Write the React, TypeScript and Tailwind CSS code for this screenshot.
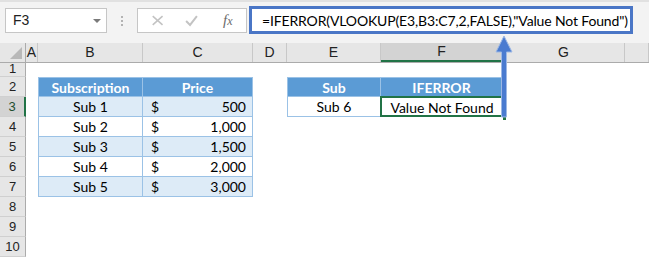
import React from "react";

const cellFont = { fontFamily: "Lato, 'Noto Sans', sans-serif" };
const uiFont = { fontFamily: "'Liberation Sans', Arial, sans-serif" };

const cols = ["A", "B", "C", "D", "E", "F", "G", ""];
const colW = ["w-[12px]", "w-[105px]", "w-[110px]", "w-[34px]", "w-[94px]", "w-[122px]", "w-[122px]", "w-[24px]"];

const data = [
  { sub: "Sub 1", price: "500" },
  { sub: "Sub 2", price: "1,000" },
  { sub: "Sub 3", price: "1,500" },
  { sub: "Sub 4", price: "2,000" },
  { sub: "Sub 5", price: "3,000" },
];

function FormulaBar() {
  return (
    <div className="h-[43px] bg-[#f3f3f3] border-t-2 border-[#e1e1e1] flex items-start pt-[6px] pl-[5px]">
      <div className="w-[102px] h-[25px] bg-white border border-[#c6c6c6] flex items-center justify-between pl-[7px] pr-[5px]" style={uiFont}>
        <span className="text-[14px] text-[#222]">F3</span>
        <span className="w-0 h-0 border-l-[4px] border-r-[4px] border-t-[4px] border-l-transparent border-r-transparent border-t-[#7a7a7a]" />
      </div>
      <div className="w-[30px] h-[25px] flex flex-col items-center justify-center gap-[2px]">
        <span className="w-[2px] h-[2px] bg-[#b3b3b3]" />
        <span className="w-[2px] h-[2px] bg-[#b3b3b3]" />
        <span className="w-[2px] h-[2px] bg-[#b3b3b3]" />
      </div>
      <div className="w-[110px] h-[25px] bg-white border border-[#c6c6c6] flex items-center">
        <svg width="110" height="23" viewBox="0 0 110 23">
          <path d="M15 7 L25 16 M25 7 L15 16" stroke="#c3c3c3" strokeWidth="1.6" />
          <path d="M49 12 L53 16 L60 7" stroke="#c3c3c3" strokeWidth="2" fill="none" />
        </svg>
        <span className="absolute ml-[85px] text-[15px] italic text-[#6b6b6b]" style={{ fontFamily: "'Liberation Serif', serif" }}>
          f<span className="text-[12px]">x</span>
        </span>
      </div>
      <div className="ml-[2px] -mt-[2px] w-[384px] h-[28px] bg-white border-[3px] border-[#4a76c6] flex items-center pl-[10px] text-[14px] tracking-[-0.15px] whitespace-nowrap overflow-hidden text-black" style={cellFont}>
        =IFERROR(VLOOKUP(E3,B3:C7,2,FALSE),"Value Not Found")
      </div>
    </div>
  );
}

function HeaderRow() {
  return (
    <div className="flex h-[20px] bg-[#e6e6e6] border-b border-[#ababab]" style={uiFont}>
      <div className="w-[26px] border-r border-[#ababab] flex items-end justify-end pr-[3px] pb-[3px]">
        <span className="w-0 h-0 border-r-[12px] border-r-[#b8b8b8] border-t-[12px] border-t-transparent" />
      </div>
      {cols.map((c, i) => (
        <div
          key={i}
          className={`${colW[i]} shrink-0 flex items-center justify-center text-[14px] text-[#222] border-r border-[#c8c8c8] ${
            c === "F" ? "bg-[#d3d3d3] border-b-2 border-b-[#217346] text-[#1e4e2f]" : ""
          }`}
        >
          {c}
        </div>
      ))}
    </div>
  );
}

function RowHead({ n, active = false }: { n: number; active?: boolean }) {
  return (
    <div
      className={`w-[26px] h-[20px] shrink-0 flex items-center justify-center text-[13px] border-b border-[#d0d0d0] ${
        active ? "bg-[#d3d3d3] border-r-2 border-r-[#217346] text-[#1e4e2f]" : "bg-[#e6e6e6] border-r border-r-[#ababab] text-[#222]"
      }`}
      style={uiFont}
    >
      {n}
    </div>
  );
}

export default function App() {
  const blue = "border-[#9bc2e6]";
  return (
    <div className="w-[649px] h-[258px] bg-white overflow-hidden relative select-none">
      <FormulaBar />
      <HeaderRow />
      <div className="text-[14px] text-black" style={cellFont}>
        <div className="flex h-[14px]">
          <div className="w-[26px] h-[14px] bg-[#e6e6e6] border-r border-[#ababab] border-b border-b-[#d0d0d0] flex items-end justify-center text-[13px] leading-[14px] text-[#222]" style={uiFont}>1</div>
        </div>
        {/* row 2 - headers */}
        <div className="flex h-[20px]">
          <RowHead n={2} />
          <div className="w-[12px]" />
          <div className={`w-[105px] bg-[#5b9bd5] border-l border-t border-r border-b ${blue} text-white font-bold flex items-center justify-center`}>Subscription</div>
          <div className={`w-[110px] bg-[#5b9bd5] border-t border-r border-b ${blue} text-white font-bold flex items-center justify-center`}>Price</div>
          <div className="w-[34px]" />
          <div className={`w-[94px] bg-[#5b9bd5] border-l border-t border-r border-b ${blue} text-white font-bold flex items-center justify-center`}>Sub</div>
          <div className={`w-[122px] bg-[#5b9bd5] border-t border-r border-b ${blue} text-white font-bold flex items-center justify-center`}>IFERROR</div>
        </div>
        {data.map((d, i) => {
          const bg = i % 2 === 0 ? "bg-[#ddebf7]" : "bg-white";
          return (
            <div key={i} className="flex h-[20px]">
              <RowHead n={i + 3} active={i === 0} />
              <div className="w-[12px]" />
              <div className={`w-[105px] ${bg} border-l border-r border-b ${blue} flex items-center justify-center`}>{d.sub}</div>
              <div className={`w-[110px] ${bg} border-r border-b ${blue} flex items-center justify-between pl-[8px] pr-[6px]`}>
                <span>$</span>
                <span>{d.price}</span>
              </div>
              {i === 0 && (
                <>
                  <div className="w-[34px]" />
                  <div className={`w-[94px] bg-white border-l border-r border-b ${blue} flex items-center justify-center`}>Sub 6</div>
                  <div className="w-[122px] relative flex items-center justify-center">
                    <div className="absolute -left-[1px] -top-[1px] w-[124px] h-[21px] border-2 border-[#217346]" />
                    <div className="absolute -right-[4px] bottom-[-4px] w-[5px] h-[5px] bg-[#217346] border border-white" />
                    Value Not Found
                  </div>
                </>
              )}
            </div>
          );
        })}
        {[8, 9, 10].map((n) => (
          <div key={n} className="flex h-[20px]">
            <RowHead n={n} />
          </div>
        ))}
      </div>
      <svg className="absolute left-[494px] top-[35px]" width="20" height="84" viewBox="0 0 20 84">
        <path d="M10 1 L18 17 L12.5 17 L12.5 82 L7.5 82 L7.5 17 L2 17 Z" fill="#4a7bd0" stroke="#9db8e4" strokeWidth="1" />
      </svg>
    </div>
  );
}
